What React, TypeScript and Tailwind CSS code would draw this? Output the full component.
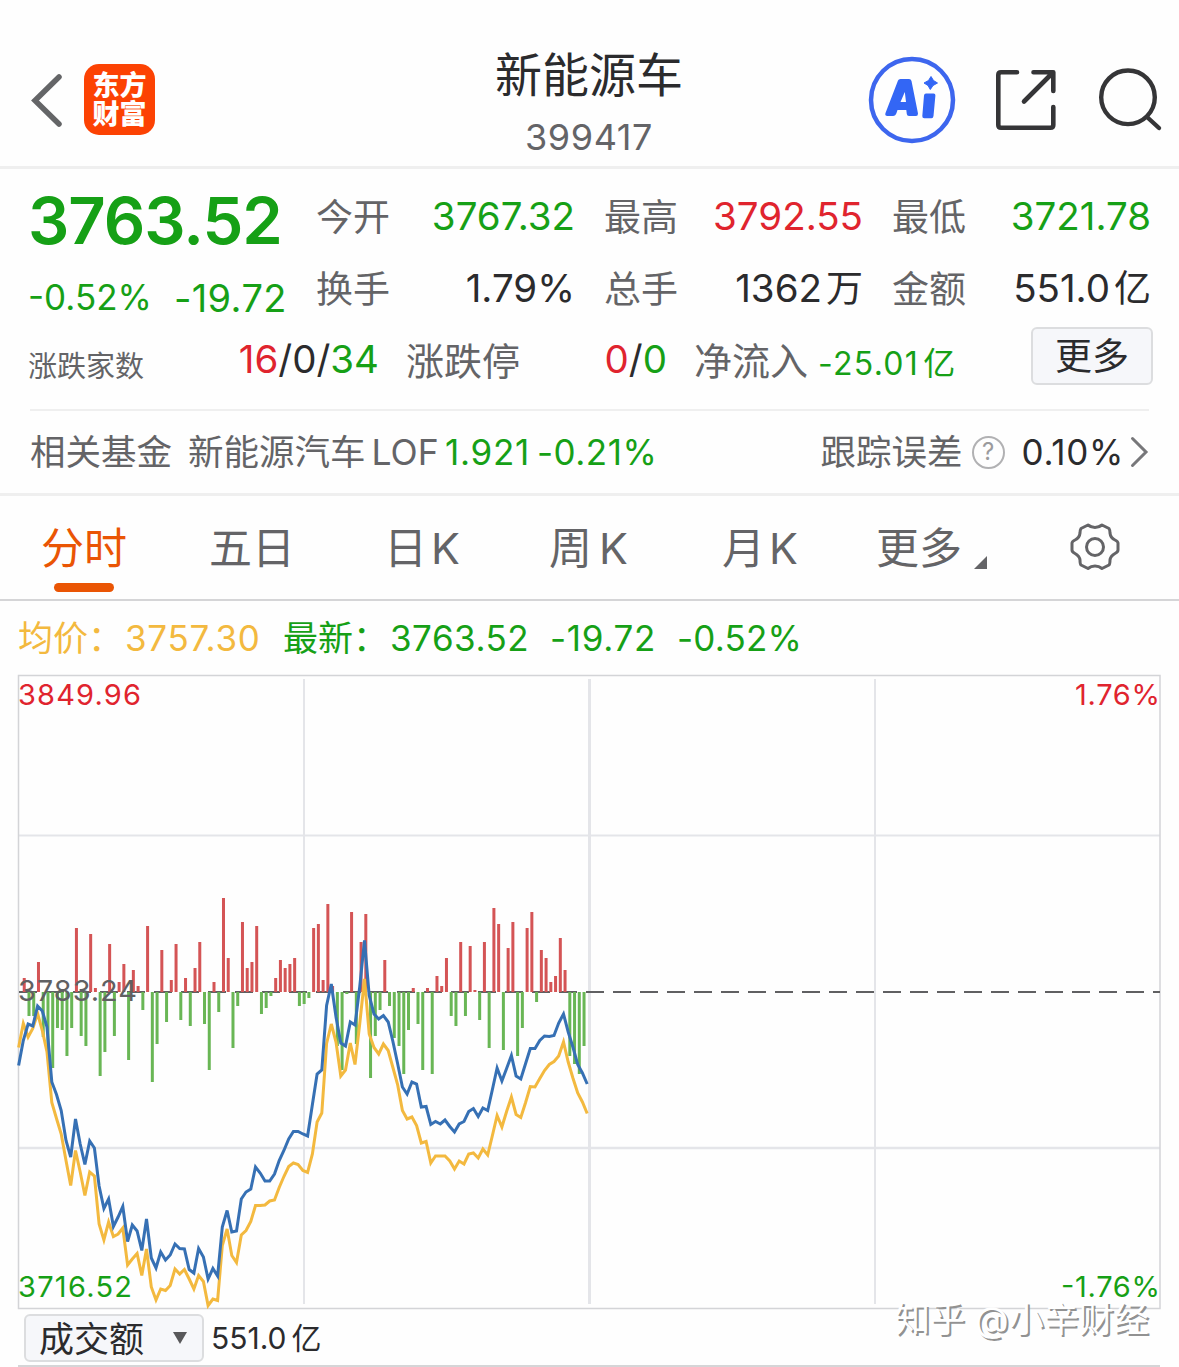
import React from 'react';

const upDown = [
  14, -24, -24, 30, -45, -60, -76, -36, -38, -64, -36, 64, -44, -54, 58, 4, -84, -60, 48, -44,
  10, 28, -68, 22, 6, -18, 66, -90, -52, 42, -30, 12, 48, -28, 14, -34, 24, 50, -32, -78,
  10, -20, 94, 34, -56, -14, 70, 24, 30, 66, -22, -16, -4, 14, 32, 24, 28, 34, -14, -12,
  -6, 64, 68, 12, 88, 6, -54, -78, -2, 80, -52, 50, 78, -86, -44, -18, 32, -14, -46, -54,
  -82, -38, 4, -32, -78, 4, -82, 16, 6, 34, -24, -34, 50, -24, 46, 2, -28, 50, -56, 84,
  68, -58, 44, 70, -64, -36, 64, 80, -10, 42, 34, 10, 16, 54, 22, -64, -72, -82, -54,
];

const priceLine = [
  1065, 1040, 1023.5, 1025.5, 1005.5, 1010.5, 1026.5, 1081.5, 1094, 1110, 1140, 1156.5, 1118.5, 1143.5, 1164,
  1140.5, 1147.5, 1185.5, 1208, 1198.5, 1226, 1216.5, 1206, 1241, 1224.5, 1230.5, 1250, 1218.5, 1257.5, 1267.5,
  1251.5, 1259.5, 1254.5, 1243.5, 1248, 1248.5, 1269, 1272.5, 1248, 1256.5, 1278.5, 1268, 1275.5, 1226.5, 1210,
  1231.5, 1230.5, 1198.5, 1191.5, 1188.5, 1166.5, 1172.5, 1180.5, 1180.5, 1173.5, 1160, 1150, 1138.5, 1131, 1131,
  1133.5, 1135.5, 1104, 1073.5, 1069.5, 1005, 983.5, 1016.5, 1042.5, 1045.5, 1021.5, 1024.5, 986.5, 940, 995,
  1013.5, 1018.5, 1015, 1021.5, 1041, 1063, 1086.5, 1093.5, 1081.5, 1083.5, 1106.5, 1106, 1124, 1121, 1123.5,
  1119.5, 1126, 1131.5, 1123.5, 1121, 1111, 1108, 1116, 1107.5, 1110, 1089, 1067.5, 1080.5, 1068, 1055,
  1075.5, 1078.5, 1063, 1048, 1048, 1040, 1035.5, 1036, 1035, 1022.5, 1013.5, 1031.5, 1046.5, 1064, 1072.5, 1083.5,
];

const averageLine = [
  1047, 1023, 1036.5, 1028, 1013, 1030, 1051.5, 1102, 1118, 1133.5, 1160, 1185, 1150, 1171.5, 1195,
  1171.5, 1175.5, 1223.5, 1239.5, 1221.5, 1236, 1233.5, 1227.5, 1264.5, 1258.5, 1253, 1275, 1248.5, 1286.5, 1299.5,
  1288.5, 1290, 1285, 1268.5, 1273.5, 1269, 1278.5, 1288.5, 1275, 1281, 1305, 1298.5, 1300, 1245, 1228.5,
  1255, 1262, 1234.5, 1230, 1221, 1205, 1205, 1204.5, 1200.5, 1199.5, 1187, 1176, 1166, 1162.5, 1164,
  1170, 1172, 1153.5, 1121.5, 1112.5, 1043, 1023.5, 1041.5, 1075.5, 1069.5, 1042.5, 1064, 1023.5, 978.5, 1033.5,
  1047, 1053.5, 1043.5, 1050, 1067, 1084, 1110, 1118.5, 1116.5, 1125, 1142.5, 1141, 1162.5, 1155.5, 1155.5,
  1155.5, 1160.5, 1168.5, 1160.5, 1163.5, 1153.5, 1152.5, 1157.5, 1148.5, 1154.5, 1135, 1115, 1126.5, 1111, 1096.5,
  1114, 1117, 1102, 1086, 1086.5, 1078, 1070, 1064, 1061, 1055.5, 1041.5, 1061.5, 1077.5, 1092.5, 1101.5, 1113,
];

const toPoints = (values: number[]) =>
  values.map((y, i) => `${(18.6 + i * 4.738).toFixed(1)},${y + 0.5}`).join(' ');

const stats = [
  { label: '今开', value: '3767.32', unit: '', color: 'text-[#16a016]' },
  { label: '最高', value: '3792.55', unit: '', color: 'text-[#e0242e]' },
  { label: '最低', value: '3721.78', unit: '', color: 'text-[#16a016]' },
  { label: '换手', value: '1.79%', unit: '', color: 'text-[#2b2b2d]' },
  { label: '总手', value: '1362', unit: '万', color: 'text-[#2b2b2d]' },
  { label: '金额', value: '551.0', unit: '亿', color: 'text-[#2b2b2d]' },
];

const Header: React.FC = () => (
  <header className="flex h-[169px] items-start border-b-[3px] border-[#efefef]">
    <svg className="mt-[74px] ml-[31px] h-[53px] w-[31px]" viewBox="0 0 31 53" fill="none">
      <path d="M28 3 L4 26.5 L28 50" stroke="#646567" strokeWidth="5.5" strokeLinecap="round" />
    </svg>
    <div className="mt-[64px] ml-[22px] grid size-[71px] content-center justify-center rounded-[15px] bg-[#fc4203] text-center text-[27px] leading-[29px] font-black text-white">
      <span>东方</span>
      <span>财富</span>
    </div>
    <div className="ml-[335px] w-[198px] text-center">
      <h1 className="mt-[47px] text-[47px] leading-[56px] whitespace-nowrap text-[#2b2b2d]">新能源车</h1>
      <p className="mt-[15px] text-[36px] leading-[38px] tracking-[0.6px] text-[#646467]">399417</p>
    </div>
    <svg className="mt-[56px] ml-[180px] size-[88px]" viewBox="0 0 88 88">
      <circle cx="44" cy="44" r="41" fill="none" stroke="#3d66ee" strokeWidth="4.5" />
      <path
        d="M30 24.500 Q30.500 23 32.500 23 H41 Q43 23 43.500 25 L50 57.500 Q50 60 48 60 H41 Q39 60 38.800 58 L38.300 54 H29.500 L28.500 57 Q27.500 60 25 60 H19.500 Q16.500 60 17.500 57 Z M36.800 36 L32.500 46 H38 Z"
        fill="#3366f5"
        fillRule="evenodd"
      />
      <path d="M58 37.500 H65.500 Q67.600 37.500 67.400 39.500 L65.500 60 Q65.200 62.300 63.500 62.300 H56.300 Q54.200 62.300 54.300 60 L56 39.500 Q56.200 37.500 58 37.500 Z" fill="#3366f5" />
      <path d="M63 20.500 L65.500 24.500 L69.500 27 L65 29.500 L62.300 33.500 L60 29.500 L56 27 L60.500 24.500 Z" fill="#3366f5" stroke="#3366f5" strokeWidth="1" strokeLinejoin="round" />
    </svg>
    <svg className="mt-[69px] ml-[39px] h-[62px] w-[62px]" viewBox="0 0 62 62" fill="none" stroke="#353537" strokeWidth="4.6" strokeLinecap="round" strokeLinejoin="round">
      <path d="M22 3.3 H6 Q3.3 3.3 3.3 6 V56 Q3.3 58.7 6 58.7 H55.5 Q58.3 58.7 58.3 56 V38" />
      <path d="M38.5 3.3 H58.3 V22 M57 4.5 L29 32.5" />
    </svg>
    <svg className="mt-[67px] ml-[42px] h-[66px] w-[64px]" viewBox="0 0 64 66" fill="none" stroke="#353537" strokeWidth="4.4" strokeLinecap="round">
      <circle cx="29" cy="30.300" r="26.8" />
      <path d="M48 50 L60 61" />
    </svg>
  </header>
);

const Quote: React.FC = () => (
  <section className="mx-[28px] h-[240px] pt-[11px]">
    <div className="flex h-[144px]">
      <div className="w-[288px] whitespace-nowrap text-[#16a016]">
        <div className="pt-[6px] text-[65px] leading-[70px] font-semibold tracking-[-1px]">3763.52</div>
        <div className="mt-[22px] flex items-start gap-[22px] leading-[38px]">
          <span className="text-[35px]">-0.52%</span>
          <span className="mt-[1px] text-[38px] tracking-[0.4px]">-19.72</span>
        </div>
      </div>
      <div className="mt-[1px] grid w-[834px] grid-cols-3 gap-x-[30px]">
        {stats.map((s) => (
          <div key={s.label} className="flex h-[72px] items-center justify-between whitespace-nowrap">
            <span className="mt-[2px] text-[37px] text-[#646467]">{s.label}</span>
            <span className={`mr-[-1px] text-[38.5px] ${s.color}`}>
              {s.value}
              {s.unit && <span className="ml-[4px] text-[37px]">{s.unit}</span>}
            </span>
          </div>
        ))}
      </div>
    </div>
    <div className="mr-[-8px] flex h-[72px] items-center whitespace-nowrap">
      <span className="mt-[13px] w-[117px] text-[29px] text-[#646467]">涨跌家数</span>
      <span className="w-[234px] text-right text-[38.5px] text-[#2b2b2d]">
        <span className="text-[#e0242e]">16</span>/0/<span className="text-[#16a016]">34</span>
      </span>
      <span className="mt-[2px] ml-[27px] w-[114px] text-[38px] text-[#646467]">涨跌停</span>
      <span className="w-[147px] text-right text-[38.5px] text-[#2b2b2d]">
        <span className="text-[#e0242e]">0</span>/<span className="text-[#16a016]">0</span>
      </span>
      <span className="mt-[2px] ml-[27px] w-[114px] text-[38px] text-[#646467]">净流入</span>
      <span className="mt-[8px] ml-[10px] w-[138px] text-[32px] tracking-[1.3px] text-[#16a016]">
        -25.01<span className="ml-[4px]">亿</span>
      </span>
      <button className="mt-[-8px] ml-[75px] h-[58px] w-[122px] shrink-0 rounded-[6px] border-2 border-[#dcdddf] bg-[#f6f7fa] text-[37px] leading-[55px] text-[#2b2b2d]">更多</button>
    </div>
  </section>
);

const Fund: React.FC = () => (
  <section className="border-b-[3px] border-[#efefef]">
    <div className="mx-[30px] flex h-[84px] items-center border-t-2 border-[#efefef] text-[35.5px] whitespace-nowrap text-[#646467]">
      <span className="mt-[2px] w-[158px]">相关基金</span>
      <span className="mt-[2px] w-[257px]">新能源汽车<span className="ml-[6px]">LOF</span></span>
      <span className="w-[92px] text-[35px] tracking-[0.7px] text-[#16a016]">1.921</span>
      <span className="w-[121px] text-[35px] tracking-[0.5px] text-[#16a016]">-0.21%</span>
      <span className="mt-[2px] ml-auto">跟踪误差</span>
      <span className="ml-[9px] grid size-[33px] place-items-center rounded-full border-2 border-[#b1b1b3] text-[24px] leading-none text-[#9b9b9d]">?</span>
      <span className="ml-[17px] text-[35px] tracking-[0.7px] text-[#2b2b2d]">0.10%</span>
      <svg className="ml-[6px] h-[32px] w-[19px]" viewBox="0 0 19 32" fill="none">
        <path d="M2.5 2.5 L16 16 L2.5 29.5" stroke="#77777a" strokeWidth="3" strokeLinecap="round" />
      </svg>
    </div>
  </section>
);

const Tabs: React.FC = () => (
  <nav className="flex h-[105px] items-start border-b-2 border-[#d5d5d7] pt-[24px] pl-[41px] text-[43px] leading-[56px] whitespace-nowrap text-[#646467]">
    <div className="flex w-[168px] flex-col items-start text-[#ea5504]">
      <span>分时</span>
      <span className="mt-[7px] ml-[13px] h-[9px] w-[60px] rounded-full bg-[#ea5504]" />
    </div>
    <span className="w-[175px]">五日</span>
    <span className="w-[165px]">日<span className="ml-[4px]">K</span></span>
    <span className="w-[173px]">周<span className="ml-[7px]">K</span></span>
    <span className="w-[154px]">月<span className="ml-[4px]">K</span></span>
    <span className="w-[98px]">更多</span>
    <svg className="mt-[36px] size-[13px]" viewBox="0 0 13 13">
      <path d="M13 0 V13 H0 Z" fill="#646467" />
    </svg>
    <svg className="mt-[1px] ml-[82px] h-[52px] w-[52px]" viewBox="0 0 52 52" fill="none" stroke="#646467" strokeWidth="3" strokeLinejoin="round">
      <path d="M19 4 Q22 6.5 26 6.5 Q30 6.5 33 4 L40 7.5 Q41 9 41 12 Q41.5 17 46 19 Q49 20.5 49 22 V29 Q49 31 46 32.5 Q41.5 35 41 39 Q41 43 40 44 L33 47.5 Q30 45 26 45 Q22 45 19 47.5 L12 44 Q11 43 11 39 Q10.500 35 6 32.5 Q3 31 3 29 V22 Q3 20.5 6 19 Q10.500 17 11 12 Q11 9 12 7.500 Z" />
      <circle cx="26" cy="26" r="8.5" />
    </svg>
  </nav>
);

const Chart: React.FC = () => (
  <svg className="block h-[636px] w-[1179px]" viewBox="0 674 1179 636">
    <g stroke="#e4e5e9" strokeWidth="2">
      <path d="M19 835.500 H1160" />
      <path d="M19 1148 H1160" strokeWidth="2.500" />
      <path d="M304 679 V1304" />
      <path d="M589.500 679 V1304" strokeWidth="3" />
      <path d="M875 679 V1304" />
    </g>
    <path d="M18.500 675.500 H1160 V1308.500 H18.500 Z" fill="none" stroke="#d3d4d7" strokeWidth="1.500" />
    <path d="M19 992 H1160" stroke="#606062" strokeWidth="2" strokeDasharray="18 9" />
    {upDown.map((v, i) => (
      <rect
        key={i}
        x={18 + (i + 1) * 4.744}
        y={v > 0 ? 992 - v : 992}
        width="3"
        height={Math.abs(v)}
        fill={v > 0 ? '#d45455' : '#69b655'}
      />
    ))}
    <polyline points={toPoints(averageLine)} fill="none" stroke="#f3b93f" strokeWidth="3" />
    <polyline points={toPoints(priceLine)} fill="none" stroke="#3670b4" strokeWidth="3" />
    <g fontSize="29">
      <text x="18" y="705" fill="#e0242e" textLength="123">3849.96</text>
      <text x="1160" y="705" fill="#e0242e" textAnchor="end" textLength="85">1.76%</text>
      <text x="18" y="1001" fill="#606062" textLength="119">3783.24</text>
      <text x="18" y="1297" fill="#16a016" textLength="114">3716.52</text>
      <text x="1160" y="1297" fill="#16a016" textAnchor="end" textLength="99">-1.76%</text>
    </g>
  </svg>
);

const App: React.FC = () => {
  return (
    <div className="relative h-[1367px] w-[1179px] overflow-hidden bg-[#fefefe] font-['Inter','Noto_Sans_CJK_SC',sans-serif]">
      <Header />
      <Quote />
      <Fund />
      <Tabs />
      <div className="flex h-[73px] items-center pt-[2px] pl-[18px] text-[35px] whitespace-nowrap text-[#16a016]">
        <span className="w-[107px] text-[#f3b93f]">均价：</span>
        <span className="w-[158px] tracking-[0.7px] text-[#f3b93f]">3757.30</span>
        <span className="w-[107px]">最新：</span>
        <span className="w-[160px] tracking-[0.5px]">3763.52</span>
        <span className="w-[127px] tracking-[0.7px]">-19.72</span>
        <span className="tracking-[0.2px]">-0.52%</span>
      </div>
      <Chart />
      <div className="mr-[19px] ml-[18px] flex h-[57px] items-start border-b-2 border-[#d5d5d7] pt-[4px] pl-[6px] text-[#2b2b2d]">
        <div className="flex h-[48px] w-[180px] items-center justify-between rounded-[6px] border-2 border-[#dcdddf] bg-[#f6f7fa] pr-[15px] pl-[13px] text-[35px]">
          <span className="mt-[2px]">成交额</span>
          <svg className="size-[14px]" viewBox="0 0 14 14">
            <path d="M0 1 H14 L7 13 Z" fill="#58585a" />
          </svg>
        </div>
        <span className="ml-[7px] text-[30px] leading-[48px]">
          551.0<span className="ml-[5px]">亿</span>
        </span>
      </div>
      <div className="absolute top-[1300px] left-[895px] text-[35px] leading-[38px] whitespace-nowrap text-white [text-shadow:2px_2px_0.5px_#929292]">
        知乎 @小辛财经
      </div>
    </div>
  );
};

export default App;
